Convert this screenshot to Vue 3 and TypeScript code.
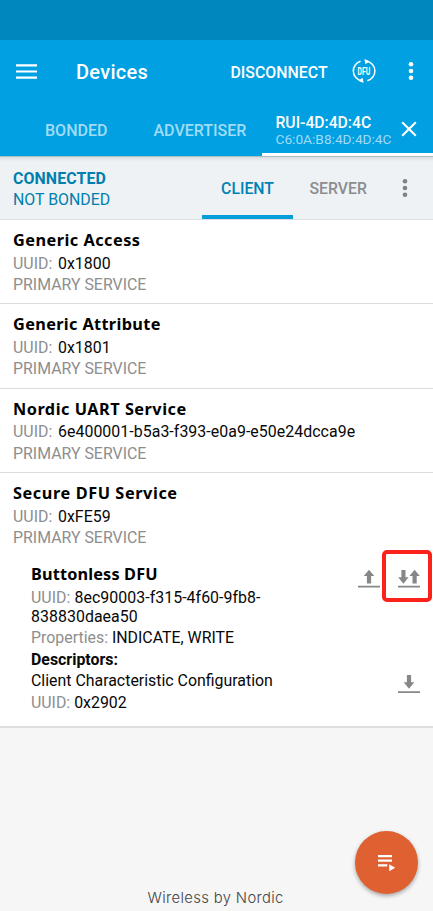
<script setup lang="ts">
interface Service {
  name: string
  uuid: string
}

const services: Service[] = [
  { name: 'Generic Access', uuid: '0x1800' },
  { name: 'Generic Attribute', uuid: '0x1801' },
  { name: 'Nordic UART Service', uuid: '6e400001-b5a3-f393-e0a9-e50e24dcca9e' },
  { name: 'Secure DFU Service', uuid: '0xFE59' },
]
</script>

<template>
  <div class="screen">
    <div class="status-bar"></div>

    <header class="app-bar">
      <div class="toolbar">
        <svg class="menu" width="21" height="15" viewBox="0 0 21 15">
          <path d="M0 1.3H21M0 7.5H21M0 13.7H21" stroke="#fff" stroke-width="2.2" />
        </svg>
        <h1 class="title">Devices</h1>
        <span class="disconnect">DISCONNECT</span>
        <svg class="dfu" width="24" height="24" viewBox="0 0 24 24">
          <path d="M8.6 2.3A10 10 0 0 0 9.2 21.7M15.4 21.7A10 10 0 0 0 14.8 2.2" fill="none" stroke="#fff" stroke-width="1.5" />
          <path d="M12.4 0.1L17.6 2.2L13.4 5.2ZM11.6 23.9L6.4 21.8L10.6 18.8Z" fill="#fff" />
          <text x="12" y="15.9" text-anchor="middle" textLength="12.8" lengthAdjust="spacingAndGlyphs">DFU</text>
        </svg>
        <svg class="more" width="6" height="20" viewBox="0 0 6 20">
          <circle cx="3" cy="3.2" r="2.3" /><circle cx="3" cy="10" r="2.3" /><circle cx="3" cy="16.8" r="2.3" />
        </svg>
      </div>
      <nav class="tabs">
        <span class="tab bonded">BONDED</span>
        <span class="tab advertiser">ADVERTISER</span>
        <div class="tab device">
          <div class="device-text">
            <span class="device-name">RUI-4D:4D:4C</span>
            <span class="device-address">C6:0A:B8:4D:4D:4C</span>
          </div>
          <svg class="close" width="16" height="16" viewBox="0 0 16 16">
            <path d="M1.2 1.2L14.8 14.8M14.8 1.2L1.2 14.8" stroke="#fff" stroke-width="2.1" />
          </svg>
        </div>
      </nav>
    </header>

    <section class="connection">
      <div class="state">
        <strong class="connected">CONNECTED</strong>
        <span class="not-bonded">NOT BONDED</span>
      </div>
      <span class="side client">CLIENT</span>
      <span class="side server">SERVER</span>
      <svg class="more-grey" width="6" height="20" viewBox="0 0 6 20">
        <circle cx="3" cy="3.2" r="2.3" /><circle cx="3" cy="10" r="2.3" /><circle cx="3" cy="16.8" r="2.3" />
      </svg>
    </section>

    <main class="services">
      <article v-for="(service, index) in services" :key="service.name" class="service">
        <h2 class="name" :class="`name-${index}`">{{ service.name }}</h2>
        <p class="line uuid"><span class="label">UUID:</span> {{ service.uuid }}</p>
        <p class="line label primary">PRIMARY SERVICE</p>
      </article>

      <article class="characteristic">
        <div class="details">
          <h2 class="name name-4">Buttonless DFU</h2>
          <p class="uuid-long"><span class="label">UUID:</span> 8ec90003-f315-4f60-9fb8-<br />838830daea50</p>
          <p class="line properties"><span class="label">Properties:</span> INDICATE, WRITE</p>
          <p class="line descriptors">Descriptors:</p>
          <p class="line">Client Characteristic Configuration</p>
          <p class="line"><span class="label">UUID:</span> 0x2902</p>
        </div>
        <div class="actions">
          <div class="action-row">
            <svg class="write" width="22" height="19" viewBox="0 0 22 19">
              <path d="M11 .7L16.3 7H13.1V14.5H8.9V7H5.7ZM0 16.7H22V18.6H0Z" />
            </svg>
            <div class="highlight">
              <svg width="22" height="19" viewBox="0 0 22 19">
                <path d="M3.4 1H7.5V8.3H10.6L5.4 14.7L.2 8.3H3.4ZM16.6 .7L21.8 7H18.7V14.5H14.5V7H11.4ZM0 16.7H22V18.6H0Z" />
              </svg>
            </div>
          </div>
          <svg class="read" width="22" height="20" viewBox="0 0 22 20">
            <path d="M8.9 1H13.1V8.3H16.3L11 14.7L5.7 8.3H8.9ZM0 17.2H22V19.1H0Z" />
          </svg>
        </div>
      </article>
    </main>

    <footer class="footer">
      <span class="brand">Wireless by Nordic</span>
      <button class="fab" aria-label="Macros">
        <svg width="18" height="17" viewBox="0 0 18 17">
          <path d="M0 0H14V2.2H0ZM0 4.6H14V6.8H0ZM0 9.2H9.3V11.4H0ZM11.2 9.3L17.2 12.8L11.2 16.3Z" fill="#fff" />
        </svg>
      </button>
    </footer>
  </div>
</template>

<style>
body {
  background: #f6f6f6;
}
</style>

<style scoped>
* {
  box-sizing: border-box;
}

h1,
h2,
p {
  margin: 0;
  font-weight: 400;
}

svg {
  display: block;
  flex: none;
}

.screen {
  display: flex;
  flex-direction: column;
  width: 433px;
  height: 911px;
  overflow: hidden;
  background: #f6f6f6;
  color: #080808;
  font: 15.9px/21.5px Roboto, sans-serif;
  white-space: nowrap;
}

.status-bar {
  flex: none;
  height: 40px;
  background: #0087bb;
}

.app-bar {
  flex: none;
  height: 117px;
  border-bottom: 1px solid #aebcc4;
  background: #00a0e2;
  color: #fff;
}

.toolbar {
  display: flex;
  align-items: center;
  height: 64px;
  padding-left: 16px;
}

.menu {
  margin-top: -2px;
}

.title {
  width: 154.5px;
  margin-left: 39px;
  padding-top: 1px;
  font-size: 20px;
  font-weight: 500;
  letter-spacing: 0.3px;
}

.disconnect {
  width: 121.5px;
  padding-top: 1px;
  font-size: 15.9px;
  font-weight: 500;
}

.dfu {
  margin-top: -2px;
}

.dfu text {
  fill: #fff;
  font: 700 10.8px Roboto, sans-serif;
}

.more {
  margin: -2px 0 0 32px;
  fill: #fff;
}

.tabs {
  display: flex;
  height: 52px;
}

.tab {
  line-height: 53px;
  font-size: 16px;
  font-weight: 500;
  color: #a0dcf6;
}

.bonded {
  width: 108.5px;
  margin-left: 45px;
}

.advertiser {
  width: 108.5px;
}

.device {
  display: flex;
  width: 171px;
  padding: 9px 0 0 13.5px;
  border-bottom: 3px solid #fff;
}

.device-text {
  display: flex;
  flex-direction: column;
  width: 125.5px;
}

.device-name {
  color: #fff;
  font-size: 15.7px;
  line-height: 20px;
}

.device-address {
  font-size: 13.7px;
  font-weight: 400;
  line-height: 13px;
}

.close {
  margin-top: 8px;
}

.connection {
  display: flex;
  flex: none;
  height: 63px;
  padding-left: 13px;
  border-bottom: 1px solid #dedfe0;
  background: #eef2f5;
  box-shadow: inset 0 5px 4px -4px #cdd3d7;
}

.state {
  display: flex;
  flex-direction: column;
  width: 189px;
  padding-top: 11px;
  color: #007fae;
}

.connected {
  font-weight: 700;
  letter-spacing: 0.1px;
}

.not-bonded {
  line-height: 20.5px;
}

.side {
  font-size: 15.8px;
  font-weight: 500;
  line-height: 64px;
}

.client {
  width: 91px;
  border-bottom: 4px solid #049edb;
  color: #0082b4;
  text-align: center;
}

.server {
  width: 108.6px;
  padding-left: 16.5px;
  color: #8b8d8f;
}

.more-grey {
  margin-top: 21px;
  fill: #808284;
}

.services {
  flex: none;
  height: 507.5px;
  border-bottom: 2px solid #dedede;
  background: #fff;
}

.service {
  height: 84.4px;
  padding: 10px 0 0 13px;
  border-bottom: 1.5px solid #dcdcdc;
}

.service:nth-child(4) {
  border-bottom: 0;
}

.name {
  height: 22.5px;
  color: #000;
  font-family: "Noto Sans", sans-serif;
  font-size: 16.3px;
  font-weight: 700;
}

.name-0 {
  letter-spacing: 0.48px;
}

.name-1 {
  letter-spacing: 0.35px;
}

.name-2 {
  letter-spacing: 0.5px;
}

.name-3 {
  letter-spacing: 0.58px;
}

.name-4 {
  letter-spacing: 0.15px;
}

.label {
  color: #8e8e8e;
}

.uuid {
  letter-spacing: 0.05px;
  word-spacing: 1.5px;
}

.characteristic {
  display: flex;
  padding: 6.5px 0 0 31px;
}

.details {
  width: 326.5px;
}

.uuid-long {
  padding-top: 1.5px;
  letter-spacing: 0.05px;
  line-height: 19px;
}

.properties {
  padding-top: 1px;
}

.descriptors {
  font-weight: 700;
}

.actions {
  fill: #878787;
}

.action-row {
  display: flex;
  height: 100px;
  margin-top: -12.5px;
}

.write {
  margin-top: 17px;
}

.highlight {
  display: flex;
  align-items: flex-start;
  width: 50px;
  height: 52px;
  margin: -2px 0 0 2px;
  padding: 15px 0 0 12px;
  border: 4px solid #fc2119;
  border-radius: 5px;
}

.read {
  margin: 22px 0 0 40.5px;
}

.footer {
  display: flex;
  flex: 1;
  padding-left: 147.5px;
}

.brand {
  width: 207.5px;
  margin-top: 160px;
  color: #444;
  font: 300 14.8px/20px Inter, sans-serif;
  letter-spacing: 0.37px;
}

.fab {
  display: flex;
  align-items: center;
  justify-content: center;
  width: 63px;
  height: 63px;
  margin-top: 103.5px;
  padding: 2px 0 0;
  border: 0;
  border-radius: 50%;
  background: #df6030;
  box-shadow: 0 2px 4px #0005;
}
</style>
